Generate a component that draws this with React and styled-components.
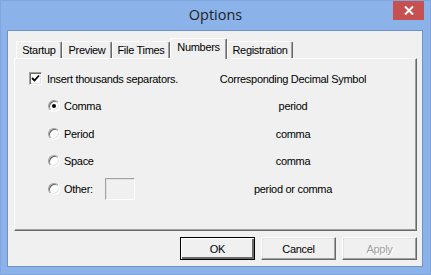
import React from "react";
import styled, { createGlobalStyle } from "styled-components";

const Global = createGlobalStyle`
  html, body { margin: 0; padding: 0; background: #8bb3ea; }
  * { box-sizing: border-box; }
`;

const Frame = styled.div`
  width: 431px;
  height: 275px;
  background: #8bb3ea;
  border: 1px solid #7fa6dd;
  display: flex;
  flex-direction: column;
  font-family: "Liberation Sans", Arial, sans-serif;
  font-size: 11px;
  letter-spacing: -0.3px;
  color: #000;
  overflow: hidden;
`;

const TitleBar = styled.div`
  height: 29px;
  display: grid;
  grid-template-columns: 1fr auto 1fr;
  align-items: start;
`;

const Title = styled.div`
  grid-column: 2;
  font-family: "Open Sans", "Liberation Sans", sans-serif;
  font-size: 14.5px;
  letter-spacing: 0;
  color: #222;
  line-height: 30px;
  margin-top: -1px;
`;

const CloseButton = styled.div`
  grid-column: 3;
  justify-self: end;
  width: 31px;
  height: 20px;
  margin-top: -1px;
  margin-right: 6px;
  background: #c75050;
  display: flex;
  align-items: center;
  justify-content: center;
`;

const Client = styled.div`
  margin-left: 6px;
  width: 416px;
  height: 237px;
  background: #f0f0f0;
  border: 1px solid #6f93c8;
  padding: 7px 5px 0 6px;
  display: flex;
  flex-direction: column;
`;

const TabStrip = styled.div`
  height: 20px;
  display: flex;
  align-items: flex-end;
  padding-left: 2px;
  position: relative;
  z-index: 1;
`;

const Tab = styled.div`
  width: ${(p) => p.$w}px;
  height: ${(p) => (p.$active ? 21 : 17)}px;
  margin-bottom: ${(p) => (p.$active ? -1 : 0)}px;
  background: #f0f0f0;
  border-top: 1px solid #fff;
  border-left: 1px solid #fff;
  border-right: 1px solid #696969;
  box-shadow: inset -1px 0 #a0a0a0;
  border-radius: 2px 2px 0 0;
  display: flex;
  justify-content: center;
  padding-top: ${(p) => (p.$active ? 2 : 2)}px;
  line-height: 13px;
  white-space: nowrap;
`;

const Panel = styled.div`
  width: 403px;
  height: 173px;
  border-top: 1px solid #fff;
  border-left: 1px solid #fff;
  border-right: 1px solid #696969;
  border-bottom: 1px solid #696969;
  box-shadow: inset -1px -1px #a0a0a0;
  padding: 6px 0 0 14px;
  display: grid;
  grid-template-columns: 185px 158px;
  grid-auto-rows: 27.5px;
  align-items: center;
`;

const LeftCell = styled.div`
  display: flex;
  align-items: center;
  padding-left: ${(p) => p.$indent || 0}px;
  white-space: nowrap;
`;

const RightCell = styled.div`
  text-align: center;
  white-space: nowrap;
`;

const CheckBox = styled.span`
  width: 13px;
  height: 13px;
  background: #fff;
  border: 1px solid;
  border-color: #a0a0a0 #fff #fff #a0a0a0;
  box-shadow: inset 1px 1px #696969, inset -1px -1px #e3e3e3;
  display: inline-flex;
  align-items: center;
  justify-content: center;
  margin-right: 5px;
  flex: none;
`;

const Radio = styled.span`
  width: 12px;
  height: 12px;
  border-radius: 50%;
  background: #fff;
  border: 1px solid;
  border-color: #a0a0a0 #fff #fff #a0a0a0;
  box-shadow: inset 1px 1px #696969, inset -1px -1px #e3e3e3;
  display: inline-flex;
  align-items: center;
  justify-content: center;
  margin-right: 4px;
  flex: none;
`;

const Dot = styled.span`
  width: 4px;
  height: 4px;
  border-radius: 50%;
  background: #000;
`;

const OtherBox = styled.span`
  width: 30px;
  height: 22px;
  margin-left: 12px;
  border: 1px solid;
  border-color: #a0a0a0 #fff #fff #a0a0a0;
  box-shadow: inset 1px 1px #e3e3e3;
  background: #f0f0f0;
`;

const ButtonRow = styled.div`
  display: flex;
  justify-content: flex-end;
  gap: 6px;
  margin-top: 6px;
  padding-right: 0px;
  width: 403px;
`;

const Button = styled.div`
  width: 75px;
  height: 23px;
  background: #f0f0f0;
  border: 1px solid;
  border-color: ${(p) =>
    p.$default ? "#000" : "#fff #696969 #696969 #fff"};
  box-shadow: ${(p) =>
    p.$default
      ? "inset 1px 1px #fff, inset -2px -2px #696969, inset -1px -1px #a0a0a0"
      : "inset -1px -1px #a0a0a0, inset 1px 1px #e3e3e3"};
  display: flex;
  align-items: center;
  justify-content: center;
  color: ${(p) => (p.$disabled ? "#a0a0a0" : "#000")};
  text-shadow: ${(p) => (p.$disabled ? "1px 1px #fff" : "none")};
`;

const tabs = [
  { label: "Startup", w: 46 },
  { label: "Preview", w: 50 },
  { label: "File Times", w: 58 },
  { label: "Numbers", w: 57, active: true },
  { label: "Registration", w: 66 },
];

const options = [
  { label: "Comma", symbol: "period", checked: true },
  { label: "Period", symbol: "comma" },
  { label: "Space", symbol: "comma" },
  { label: "Other:", symbol: "period or comma", box: true },
];

export default function App() {
  return (
    <>
      <Global />
      <Frame>
        <TitleBar>
          <Title>Options</Title>
          <CloseButton>
            <svg width="10" height="9" viewBox="0 0 10 9">
              <path d="M1 0.5 L9 8.5 M9 0.5 L1 8.5" stroke="#fff" strokeWidth="2" />
            </svg>
          </CloseButton>
        </TitleBar>
        <Client>
          <TabStrip>
            {tabs.map((t) => (
              <Tab key={t.label} $w={t.w} $active={t.active}>
                {t.label}
              </Tab>
            ))}
          </TabStrip>
          <Panel>
            <LeftCell>
              <CheckBox>
                <svg width="9" height="9" viewBox="0 0 9 9">
                  <path d="M1 4 L3.5 6.5 L8 1.5" stroke="#000" strokeWidth="1.8" fill="none" />
                </svg>
              </CheckBox>
              Insert thousands separators.
            </LeftCell>
            <RightCell>Corresponding Decimal Symbol</RightCell>
            {options.map((o) => (
              <React.Fragment key={o.label}>
                <LeftCell $indent={19}>
                  <Radio>{o.checked && <Dot />}</Radio>
                  {o.label}
                  {o.box && <OtherBox />}
                </LeftCell>
                <RightCell>{o.symbol}</RightCell>
              </React.Fragment>
            ))}
          </Panel>
          <ButtonRow>
            <Button $default>OK</Button>
            <Button>Cancel</Button>
            <Button $disabled>Apply</Button>
          </ButtonRow>
        </Client>
      </Frame>
    </>
  );
}
